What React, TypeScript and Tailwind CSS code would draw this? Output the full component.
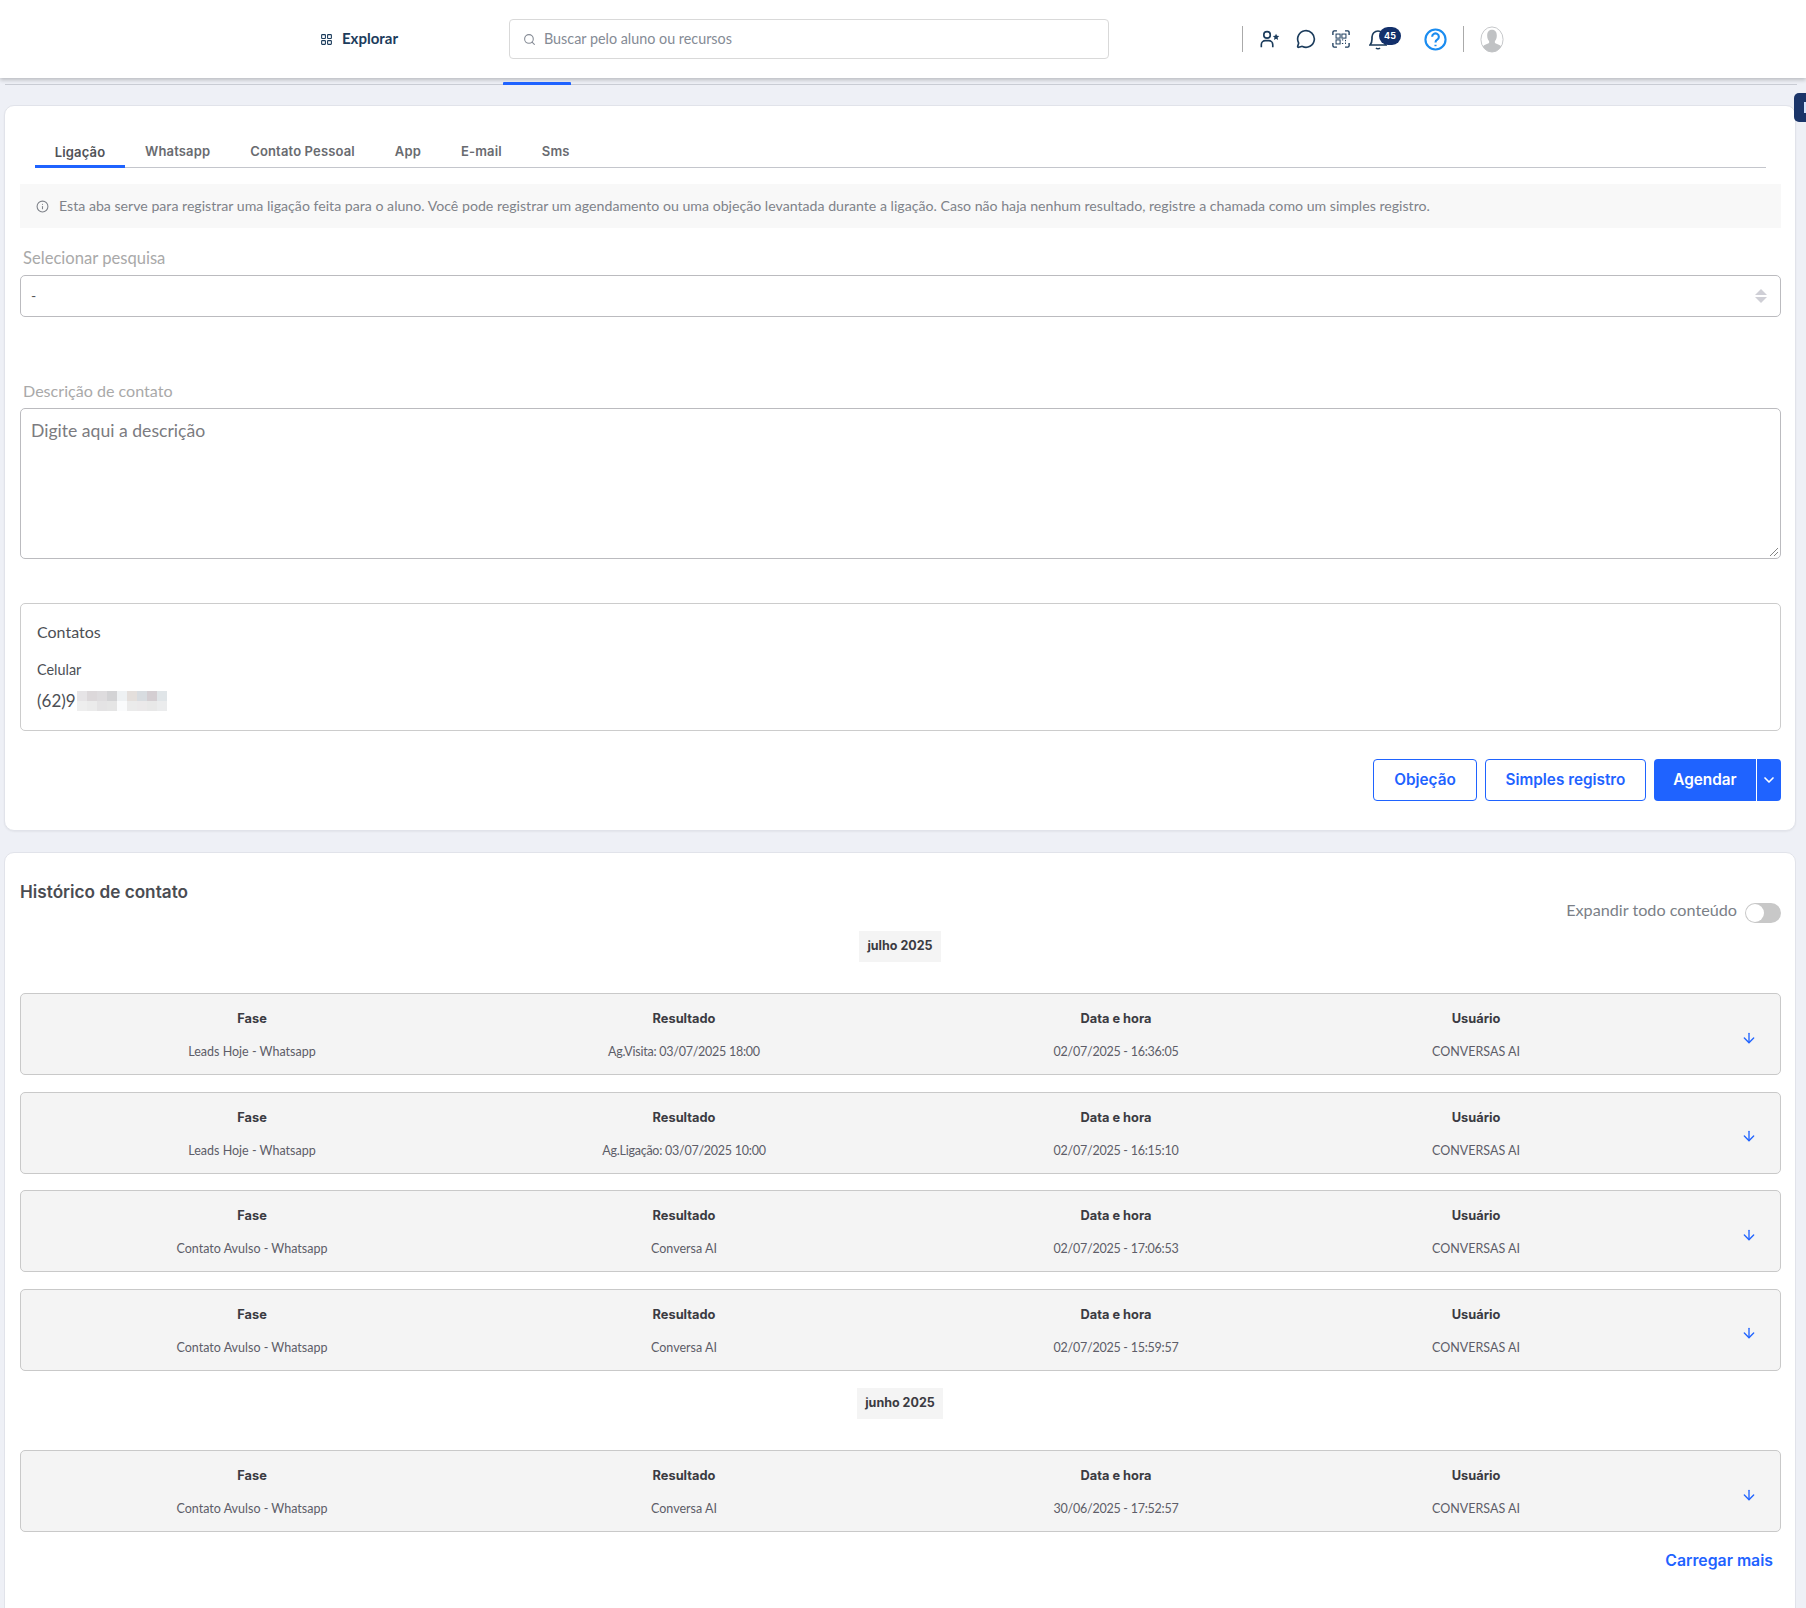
import { ArrowDown, ChevronDown, Info, LayoutGrid, MessageCircle, Search } from "lucide-react";

const nunito = "font-['Lato','Noto_Sans',sans-serif]";
const poppins = "font-['Inter','Noto_Sans',sans-serif]";

const rows = [
  { fase: "Leads Hoje - Whatsapp", resultado: "Ag.Visita: 03/07/2025 18:00", data: "02/07/2025 - 16:36:05" },
  { fase: "Leads Hoje - Whatsapp", resultado: "Ag.Ligação: 03/07/2025 10:00", data: "02/07/2025 - 16:15:10" },
  { fase: "Contato Avulso - Whatsapp", resultado: "Conversa AI", data: "02/07/2025 - 17:06:53" },
  { fase: "Contato Avulso - Whatsapp", resultado: "Conversa AI", data: "02/07/2025 - 15:59:57" },
];

const blurTop = ["bg-[#e6e4e6]", "bg-[#dcd8da]", "bg-[#dedcde]", "bg-[#d3d3d5]", "bg-[#eef1f3]", "bg-[#e4dfdc]", "bg-[#d8dce0]", "bg-[#d4ced2]", "bg-[#e0e5e8]"];
const blurBottom = ["bg-[#eeeeee]", "bg-[#ebebeb]", "bg-[#e4e3e4]", "bg-[#e5e5e5]", "bg-[#fafbfc]", "bg-[#ebebeb]", "bg-[#ebe9ea]", "bg-[#e8e8e8]", "bg-[#ebeced]"];

function HistoryRow({ fase, resultado, data }: { fase: string; resultado: string; data: string }) {
  return (
    <div className={`grid h-[82.3px] grid-cols-[432px_432px_432px_288px_1fr] rounded-[5px] border border-[#c9c9c9] bg-[#f4f4f4] pl-[15px] pr-[23px] text-center text-[12.5px] text-[#5d5d68] ${nunito}`}>
      {[["Fase", fase], ["Resultado", resultado], ["Data e hora", data], ["Usuário", "CONVERSAS AI"]].map(([title, value]) => (
        <div key={title} className="flex flex-col items-center pt-[16px]">
          <span className={`text-[12.8px] leading-[18px] font-bold text-[#3b3b42] ${poppins}`}>{title}</span>
          <span className={`mt-[15px] leading-[18px] ${/\d/.test(value) ? "tracking-[-0.25px]" : ""}`}>{value}</span>
        </div>
      ))}
      <div className="flex items-center justify-end pt-[7px]">
        <ArrowDown className="h-[16px] w-[16px] text-[#1f63ff]" strokeWidth={2} />
      </div>
    </div>
  );
}

function MonthBadge({ label }: { label: string }) {
  return (
    <div className="flex justify-center pr-[1px]">
      <span className={`flex h-[31px] items-center bg-[#f4f4f4] px-[8px] text-[12.5px] font-bold text-[#3b3b42] ${poppins}`}>{label}</span>
    </div>
  );
}

export default function App() {
  return (
    <div className={`relative min-h-[1608px] w-full overflow-hidden bg-[#eef0f6] ${nunito}`}>
      <header className="h-[78px] bg-white shadow-[0_2px_4px_rgba(0,0,0,0.22)]">
        <div className="flex h-full items-center">
          <div className="ml-[320px] flex w-[189px] items-center gap-[9px] text-[15px] font-bold text-[#1c3c5c]">
            <LayoutGrid className="h-[13px] w-[13px]" strokeWidth={2} />
            <span className="-mt-[1px]">Explorar</span>
          </div>
          <div className="flex h-[40px] w-[600px] items-center gap-[8px] rounded-[4px] border border-[#d9d9d9] pl-[13px] text-[14.35px] text-[#858b95]">
            <Search className="h-[13px] w-[13px]" strokeWidth={2} />
            <span className="-mt-[1px]">Buscar pelo aluno ou recursos</span>
          </div>
          <div className="ml-[133px] h-[26px] w-px bg-[#aaaaaa]" />
          <svg viewBox="0 0 24 22" className="ml-[16px] h-[18px] w-[21px] fill-none stroke-[#1c3c5c] stroke-[2]">
            <circle cx="9" cy="6" r="4" />
            <path d="M2 21v-3a5 5 0 0 1 5-5h4a5 5 0 0 1 5 5v3" />
            <path className="fill-[#1c3c5c] stroke-none" d="m20 4.500 1.200 2.600 2.800.3-2.100 1.900.6 2.800-2.500-1.400-2.500 1.400.6-2.800-2.100-1.900 2.800-.3z" />
          </svg>
          <MessageCircle className="ml-[16px] h-[20px] w-[20px] text-[#1c3c5c]" strokeWidth={2} />
          <svg viewBox="0 0 20 20" className="ml-[16px] h-[18px] w-[18px] fill-none stroke-[#1c3c5c]">
            <path strokeWidth="1.500" d="M1 5.500V2.500A1.500 1.500 0 0 1 2.500 1H5.500M14.500 1h3A1.500 1.500 0 0 1 19 2.500V5.500M19 14.500v3a1.500 1.500 0 0 1-1.500 1.500H14.500M5.500 19H2.500A1.500 1.500 0 0 1 1 17.500V14.500" />
            <rect strokeWidth="1.100" x="4.500" y="4.500" width="4.500" height="4.500" />
            <rect strokeWidth="1.100" x="11" y="4.500" width="4.500" height="4.500" />
            <rect strokeWidth="1.100" x="4.500" y="11" width="4.500" height="4.500" />
            <path strokeWidth="1.100" d="M11 11h1.500M11 15h1.500M15 11v1.500M15 14v1.500" />
          </svg>
          <div className="relative ml-[19px] h-[22px] w-[18px]">
            <svg viewBox="0 0 18 22" className="h-[22px] w-[18px] fill-none stroke-[#1c3c5c] stroke-[1.7]">
              <path d="M1 17c1.500-1.500 2-3 2-6V9a6 6 0 0 1 12 0v2c0 3 .5 4.500 2 6z" />
              <path d="M7 20c1 1 3 1 4 0" />
            </svg>
            <span className={`absolute -top-[1px] left-[10px] flex h-[18px] w-[22px] items-center justify-center rounded-full bg-[#13306b] text-[9px] font-bold text-white ${poppins}`}>45</span>
          </div>
          <svg viewBox="0 0 24 24" className="ml-[37px] h-[23px] w-[23px] fill-none stroke-[#1a8cf0] stroke-[2.2]">
            <circle cx="12" cy="12" r="10.500" />
            <path d="M8.500 9.200a3.500 3.500 0 1 1 5.300 3c-1.200.8-1.800 1.400-1.800 2.800" />
            <path d="M12 17.500v1.500" />
          </svg>
          <div className="ml-[16px] h-[26px] w-px bg-[#aaaaaa]" />
          <svg viewBox="0 0 24 28" className="ml-[16px] h-[27px] w-[24px]">
            <ellipse cx="12" cy="14" rx="11.500" ry="13" fill="#fff" stroke="#c4c6c8" />
            <path fill="#c0c2c4" d="M12 4c3.500 0 5 2.800 5 6 0 2.500-1 4.500-2 5.500v2c2 1.200 5 1.500 6.500 3.500C19.500 25 16 27 12 27s-7.500-2-9.500-6c1.500-2 4.500-2.300 6.500-3.500v-2c-1-1-2-3-2-5.500 0-3.200 1.500-6 5-6z" />
          </svg>
        </div>
      </header>

      <div className="relative ml-[5px] mr-[9px] mt-[6px] h-px bg-[#c9ccd4]">
        <div className="absolute -top-[2px] left-[498px] h-[3px] w-[68px] rounded-t-[1px] bg-[#1f63ff]" />
      </div>

      <div className="absolute right-0 top-[93px] flex h-[29px] w-[12px] items-center justify-end rounded-l-[5px] bg-[#1b3569]">
        <span className="h-[11px] w-[2px] bg-[#cfe3ff]" />
      </div>

      <main className="ml-[4px] mr-[10px] mt-[20px] flex flex-col gap-[21px]">
        <section className="h-[726px] rounded-[10px] border border-[#e1e3ea] bg-white pl-[15px] pr-[14px] shadow-[0_1px_2px_rgba(0,0,0,0.05)]">
          <nav className={`ml-[15px] mr-[15px] mt-[22px] flex h-[40px] items-end border-b border-[#c4c6cc] text-[13px] font-semibold tracking-[0.15px] text-[#696b70] ${poppins}`}>
            <span className="-mb-px flex h-[40px] w-[90px] items-start justify-center border-b-[3px] border-[#1f63ff] pt-[15px] text-[#505257]">Ligação</span>
            {["Whatsapp", "Contato Pessoal", "App", "E-mail", "Sms"].map((tab) => (
              <span key={tab} className="flex h-[40px] items-start px-[20px] pt-[15px]">{tab}</span>
            ))}
          </nav>
          <div className="mt-[16px] flex h-[44px] items-center gap-[10px] bg-[#f8f8f8] pl-[16px] text-[14.15px] text-[#7f838a]">
            <Info className="h-[13px] w-[13px]" strokeWidth={2} />
            Esta aba serve para registrar uma ligação feita para o aluno. Você pode registrar um agendamento ou uma objeção levantada durante a ligação. Caso não haja nenhum resultado, registre a chamada como um simples registro.
          </div>
          <label className="ml-[3px] block pt-[18px] text-[16.6px] leading-[24px] text-[#a9a9a9]">Selecionar pesquisa</label>
          <div className="mt-[5px] flex h-[42px] items-center justify-between rounded-[5px] border border-[#bbbbbf] pb-[1px] pl-[10px] pr-[13px] text-[14px] text-[#555]">
            -
            <span className="flex flex-col gap-[2px]">
              <span className="h-0 w-0 border-x-[6px] border-b-[6px] border-x-transparent border-b-[#cfcfd6]" />
              <span className="h-0 w-0 border-x-[6px] border-t-[6px] border-x-transparent border-t-[#cfcfd6]" />
            </span>
          </div>
          <label className="ml-[3px] block pt-[62px] text-[16.1px] leading-[24px] text-[#a9a9a9]">Descrição de contato</label>
          <div className="relative mt-[5px] h-[151px] rounded-[5px] border border-[#bbbbbf] pl-[10px] pt-[10px] text-[17.6px] leading-[24px] text-[#7b7b80]">
            Digite aqui a descrição
            <svg viewBox="0 0 8 8" className="absolute bottom-[2px] right-[2px] h-[8px] w-[8px] stroke-[#666] stroke-[0.8]">
              <path d="M0 8 8 0M4 8l4-4" />
            </svg>
          </div>
          <div className="mt-[44px] h-[128px] rounded-[5px] border border-[#cccccc] pl-[16px] text-[#4c4f55]">
            <div className="mt-[16px] text-[16px] leading-[24px]">Contatos</div>
            <div className="mt-[16px] text-[14.4px] leading-[20px]">Celular</div>
            <div className="mt-[9px] flex h-[24px] items-center text-[17px]">
              (62)9
              <div className="ml-[1px] flex flex-col">
                <div className="flex">{blurTop.map((c, i) => <span key={i} className={`h-[10px] w-[10px] ${c}`} />)}</div>
                <div className="flex">{blurBottom.map((c, i) => <span key={i} className={`h-[10px] w-[10px] ${c}`} />)}</div>
              </div>
            </div>
          </div>
          <div className={`mt-[28px] flex justify-end gap-[8px] text-[15.3px] font-semibold text-[#1f63ff] ${poppins}`}>
            <button className="h-[42px] w-[104px] rounded-[4px] border border-[#1f63ff]">Objeção</button>
            <button className="h-[42px] w-[161px] rounded-[4px] border border-[#1f63ff]">Simples registro</button>
            <div className="flex h-[42px] overflow-hidden rounded-[4px] bg-[#1f63ff] text-white">
              <button className="w-[102px]">Agendar</button>
              <button className="flex w-[25px] items-center justify-center border-l border-white">
                <ChevronDown className="h-[16px] w-[16px]" strokeWidth={2.5} />
              </button>
            </div>
          </div>
        </section>

        <section className="h-[760px] rounded-t-[10px] border border-[#e1e3ea] bg-white pl-[15px] pr-[14px]">
          <h2 className={`mt-[27px] text-[17.2px] leading-[24px] font-semibold text-[#4a4c52] ${poppins}`}>Histórico de contato</h2>
          <div className="-mt-[4px] flex h-[24px] items-center justify-end gap-[8px] text-[16.2px] leading-[24px] text-[#7b7f87]">
            <span className="-mt-[4px]">Expandir todo conteúdo</span>
            <span className="mt-[2px] flex h-[20px] w-[36px] items-center rounded-full bg-[#c8c8c8] pl-[1px]">
              <span className="h-[18px] w-[18px] rounded-full bg-white" />
            </span>
          </div>
          <div className="mt-[7px]"><MonthBadge label="julho 2025" /></div>
          <div className="mt-[31px] flex flex-col gap-[16.3px]">
            {rows.map((row) => <HistoryRow key={row.data} {...row} />)}
          </div>
          <div className="mt-[17px]"><MonthBadge label="junho 2025" /></div>
          <div className="mt-[31px]">
            <HistoryRow fase="Contato Avulso - Whatsapp" resultado="Conversa AI" data="30/06/2025 - 17:52:57" />
          </div>
          <div className={`mt-[18px] pr-[8px] text-right text-[15.8px] leading-[22px] font-semibold text-[#1f63ff] ${poppins}`}>Carregar mais</div>
        </section>
      </main>
    </div>
  );
}
